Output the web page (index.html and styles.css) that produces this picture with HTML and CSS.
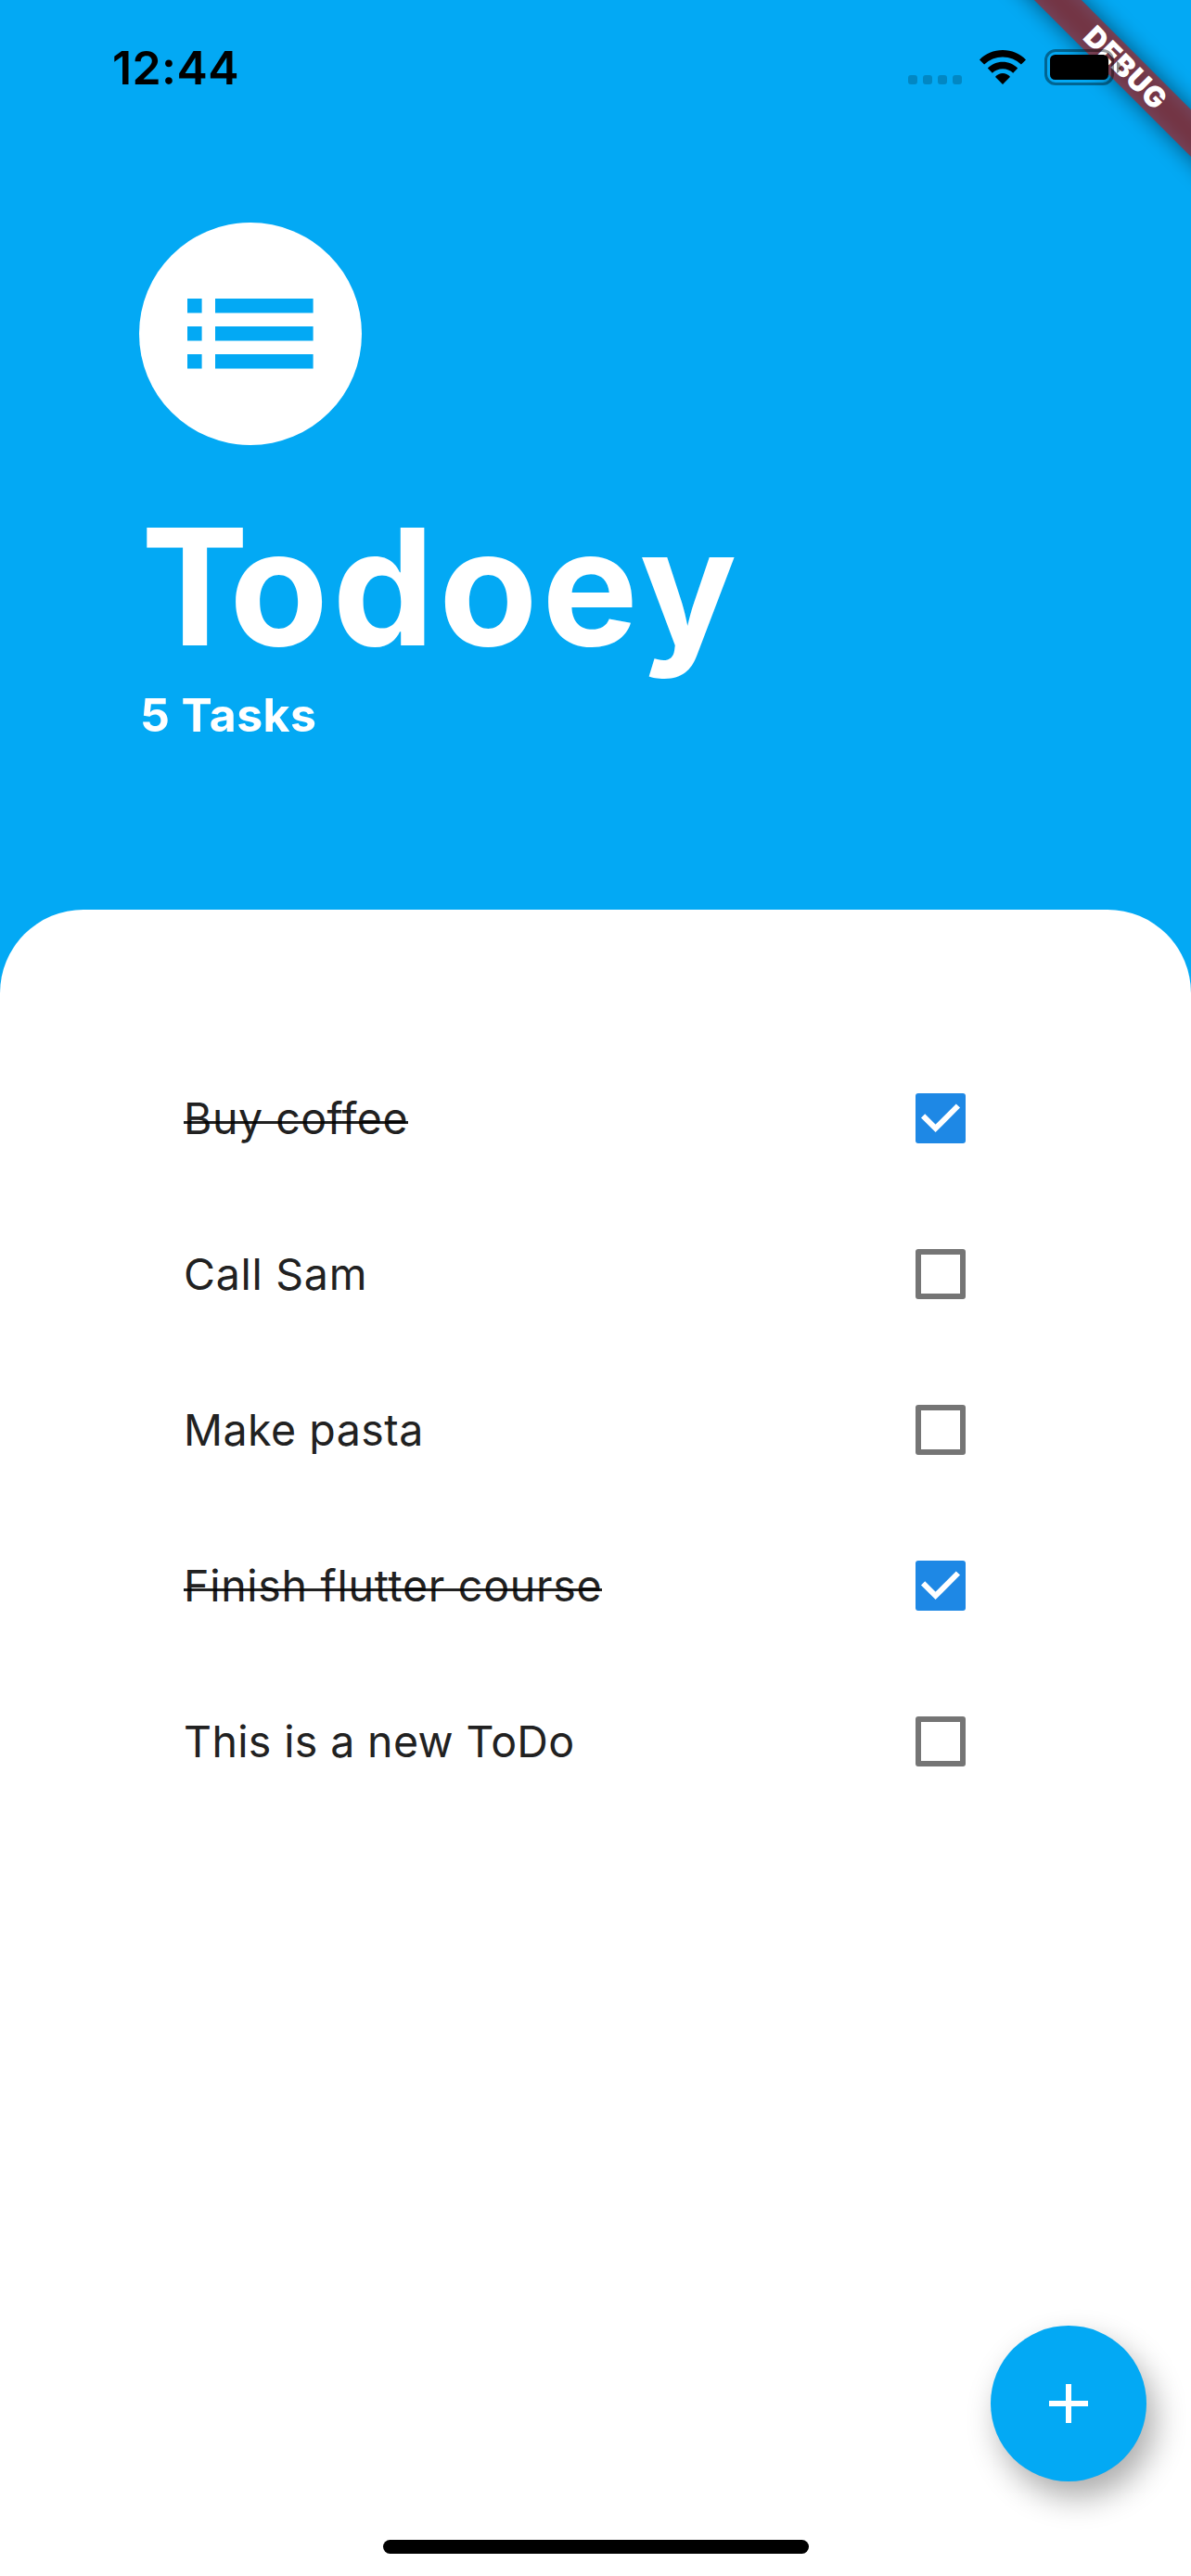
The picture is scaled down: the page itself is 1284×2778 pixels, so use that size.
FILE: index.html
```html
<!DOCTYPE html>
<html lang="en">
<head>
<meta charset="utf-8">
<title>Todoey</title>
<link rel="stylesheet" href="styles.css">
</head>
<body>
<div class="screen">
  <svg class="debug-banner" width="344" height="260" viewBox="0 0 344 260">
    <defs>
      <filter id="banner-blur" x="-300" y="-120" width="600" height="240" filterUnits="userSpaceOnUse"><feGaussianBlur stdDeviation="12"/></filter>
    </defs>
    <g transform="translate(272.2 71.8) rotate(45)">
      <rect x="-240" y="-18" width="480" height="36" fill="#000" fill-opacity=".5" filter="url(#banner-blur)"/>
      <rect x="-240" y="-18" width="480" height="36" fill="#b71c1c" fill-opacity=".627"/>
      <text class="debug-text" x="2" y="11" text-anchor="middle">DEBUG</text>
    </g>
  </svg>

  <div class="status-bar">
    <span class="clock">12:44</span>
    <div class="status-icons">
      <div class="signal"><i></i><i></i><i></i><i></i></div>
      <svg class="wifi" width="50" height="37" viewBox="0 0 50 37">
        <path d="M25 0C34.700 0 43.600 3.900 50 10.400L44.900 15.600A28.200 28.200 0 0 0 5.100 15.600L0 10.400C6.400 3.900 15.300 0 25 0Z"/>
        <path d="M25 12.800C31.200 12.800 37 15.300 41.200 19.500L36.200 24.700A16 16 0 0 0 13.800 24.700L8.800 19.500C13 15.300 18.800 12.800 25 12.800Z"/>
        <path d="M25 25C28 25 30.700 26.300 32.600 28.200Q33 28.900 32.400 29.600L25 37L17.600 29.600Q17 28.900 17.400 28.200C19.300 26.300 22 25 25 25Z"/>
      </svg>
      <svg class="battery" width="84" height="39" viewBox="0 0 84 39">
        <rect x="1.500" y="1.500" width="72" height="36" rx="10.500" fill="none" stroke="#000" stroke-opacity=".4" stroke-width="3"/>
        <rect x="6" y="6" width="63" height="27" rx="5.500"/>
        <path d="M78 13C80.600 14.100 82.300 16.600 82.300 19.500S80.600 24.900 78 26Z" fill-opacity=".45"/>
      </svg>
    </div>
  </div>

  <header class="header">
    <div class="avatar">
      <svg width="136" height="76" viewBox="0 0 136 76">
        <path d="M0 0H15.600V15.600H0ZM30 0H135.600V15.600H30ZM0 30H15.600V45.600H0ZM30 30H135.600V45.600H30ZM0 60H15.600V75.600H0ZM30 60H135.600V75.600H30Z"/>
      </svg>
    </div>
    <h1 class="title"><span class="initial">T</span>odoey</h1>
    <p class="count">5 Tasks</p>
  </header>

  <main class="sheet">
    <ul class="tasks">
      <li class="task"><span class="name done">Buy coffee</span><span class="box checked"><svg width="54" height="54" viewBox="0 0 54 54"><path d="M8.100 24.300L21.600 37.800L45.900 13.500"/></svg></span></li>
      <li class="task"><span class="name loose">Call Sam</span><span class="box"></span></li>
      <li class="task"><span class="name">Make pasta</span><span class="box"></span></li>
      <li class="task"><span class="name loose done">Finish flutter course</span><span class="box checked"><svg width="54" height="54" viewBox="0 0 54 54"><path d="M8.100 24.300L21.600 37.800L45.900 13.500"/></svg></span></li>
      <li class="task"><span class="name tight">This is a new ToDo</span><span class="box"></span></li>
    </ul>
  </main>

  <button class="fab" aria-label="Add task">
    <svg width="42" height="42" viewBox="0 0 42 42"><path d="M18 0H24V18H42V24H24V42H18V24H0V18H18Z"/></svg>
  </button>
  <div class="home-indicator"></div>
</div>
</body>
</html>
```
FILE: styles.css
```css
* { box-sizing: border-box; margin: 0; padding: 0; }

body {
  font-family: Inter, "Liberation Sans", sans-serif;
  background: #03a9f4;
}

.screen {
  position: relative;
  display: flex;
  flex-direction: column;
  width: 1284px;
  height: 2778px;
  overflow: hidden;
  background: #03a9f4;
}

.debug-banner {
  position: absolute;
  top: 0;
  right: 0;
}

.debug-text {
  font: 900 31px Inter, sans-serif;
  letter-spacing: .8px;
  fill: #fff;
}

.status-bar {
  position: relative;
  display: flex;
  justify-content: space-between;
  height: 141px;
  padding: 53px 74px 0 121px;
}

.clock {
  height: 40px;
  line-height: 40px;
  font-size: 50px;
  font-weight: 600;
  letter-spacing: .4px;
  color: #000;
}

.status-icons {
  display: flex;
  align-items: flex-start;
}

.signal {
  display: flex;
  gap: 6px;
  margin: 28px 19px 0 0;
}

.signal i {
  width: 10px;
  height: 10px;
  border-radius: 3px;
  background: rgba(0, 0, 0, .2);
}

.wifi { margin: 1px 20px 0 0; }

.header {
  height: 840px;
  padding: 99px 150px 0;
  color: #fff;
}

.avatar {
  display: flex;
  align-items: center;
  justify-content: center;
  width: 240px;
  height: 240px;
  border-radius: 50%;
  background: #fff;
}

.avatar svg { fill: #03a9f4; }

.title {
  height: 210px;
  margin: 48px 0 0 2px;
  line-height: 210px;
  font-size: 174px;
  font-weight: 700;
  letter-spacing: 4.700px;
  white-space: nowrap;
}

.initial { letter-spacing: -21px; }

.count {
  margin-top: 3px;
  padding-left: 1px;
  line-height: 60px;
  font-size: 50px;
  font-weight: 700;
  letter-spacing: .4px;
}

.sheet {
  flex: 1;
  padding: 141px 243px 0 198px;
  border-radius: 90px 90px 0 0;
  background: #fff;
}

.tasks { list-style: none; }

.task {
  display: flex;
  align-items: center;
  justify-content: space-between;
  height: 168px;
}

.name {
  position: relative;
  font-size: 46.500px;
  line-height: 60px;
  letter-spacing: .5px;
  color: #212121;
  white-space: nowrap;
}

.name.loose { letter-spacing: .72px; }
.name.tight { letter-spacing: .36px; }

.done::after {
  content: "";
  position: absolute;
  left: 0;
  right: 0;
  top: 33px;
  height: 3px;
  background: rgba(0, 0, 0, .87);
}

.box {
  width: 54px;
  height: 54px;
  border: 6px solid #757575;
  border-radius: 3px;
}

.box.checked {
  border: 0;
  background: #1e88e5;
}

.box svg {
  display: block;
  fill: none;
  stroke: #fff;
  stroke-width: 6;
}

.fab {
  position: absolute;
  left: 1068px;
  top: 2508px;
  display: flex;
  align-items: center;
  justify-content: center;
  width: 168px;
  height: 168px;
  border: 0;
  border-radius: 50%;
  background: #03a9f4;
  box-shadow: 9px 17px 34px rgba(0, 0, 0, .33);
}

.fab svg { fill: #fff; }

.home-indicator {
  position: absolute;
  left: 413px;
  bottom: 24px;
  width: 459px;
  height: 15px;
  border-radius: 8px;
  background: #000;
}
```
